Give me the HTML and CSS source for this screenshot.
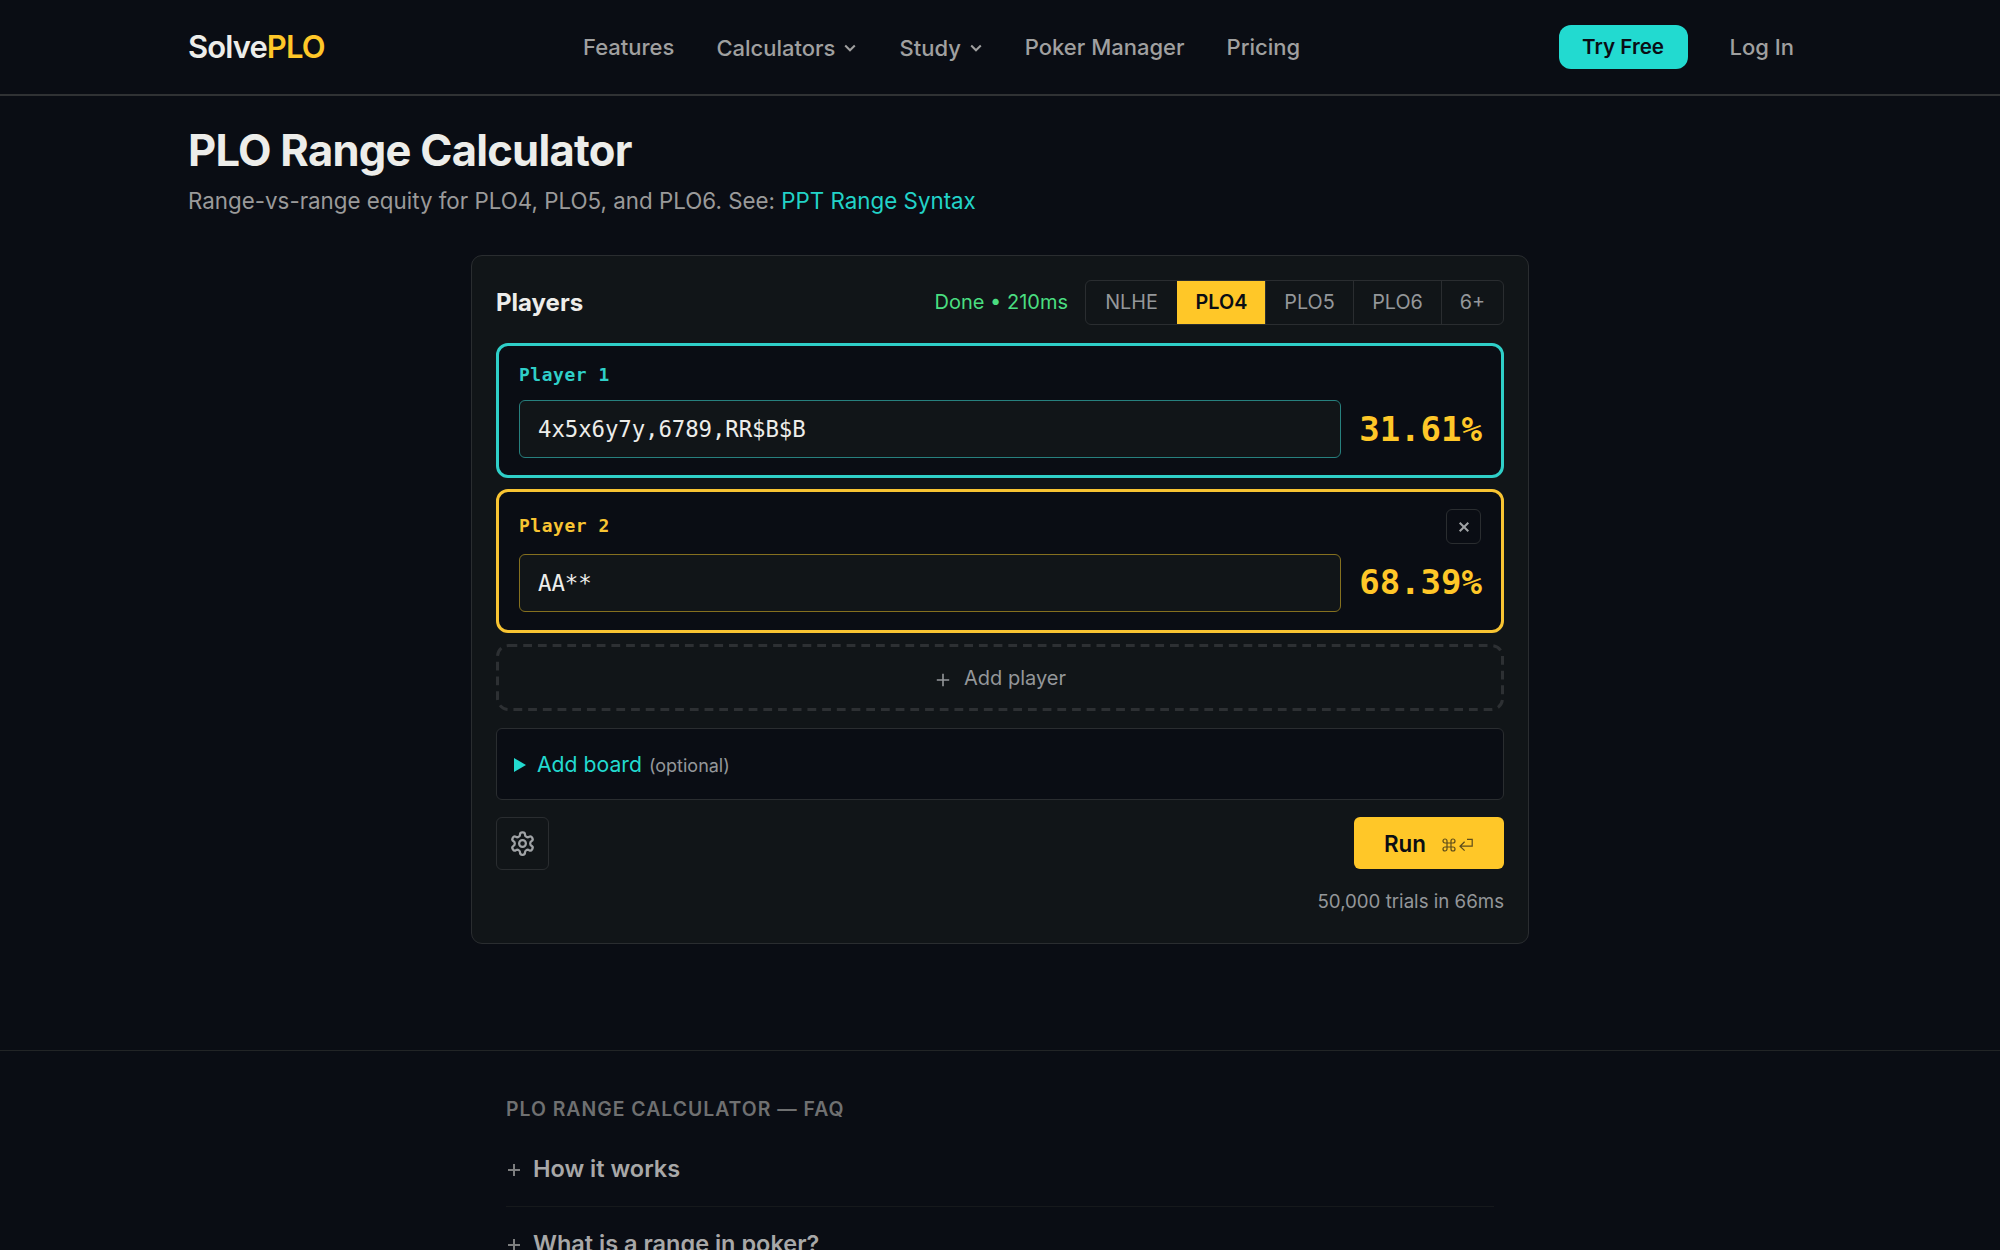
FILE: index.html
```html
<!DOCTYPE html>
<html lang="en">
<head>
  <meta charset="UTF-8">
  <meta name="viewport" content="width=device-width, initial-scale=1.0">
  <title>PLO Range Calculator</title>
  <link rel="stylesheet" href="styles.css">
</head>
<body>
  <header class="header">
    <a href="#" class="logo">Solve<span>PLO</span></a>
    <nav class="nav">
      <a href="#">Features</a>
      <a href="#" class="has-menu">Calculators
        <svg width="14" height="14" viewBox="0 0 14 14"><path d="M2.2 4.5 7 9.3l4.8-4.8"/></svg>
      </a>
      <a href="#" class="has-menu">Study
        <svg width="14" height="14" viewBox="0 0 14 14"><path d="M2.2 4.5 7 9.3l4.8-4.8"/></svg>
      </a>
      <a href="#">Poker Manager</a>
      <a href="#">Pricing</a>
    </nav>
    <div class="account">
      <a href="#" class="try">Try Free</a>
      <a href="#">Log In</a>
    </div>
  </header>

  <main class="main">
    <h1>PLO Range Calculator</h1>
    <p class="intro">Range-vs-range equity for PLO4, PLO5, and PLO6. See: <a href="#">PPT Range Syntax</a></p>

    <section class="card">
      <div class="card-head">
        <h2>Players</h2>
        <span class="status">Done • 210ms</span>
        <div class="tabs">
          <button class="tab">NLHE</button>
          <button class="tab active">PLO4</button>
          <button class="tab">PLO5</button>
          <button class="tab">PLO6</button>
          <button class="tab">6+</button>
        </div>
      </div>

      <div class="player player-1">
        <div class="player-head"><span class="name">Player 1</span></div>
        <div class="player-row">
          <input type="text" class="range" value="4x5x6y7y,6789,RR$B$B">
          <span class="equity">31.61%</span>
        </div>
      </div>

      <div class="player player-2">
        <div class="player-head">
          <span class="name">Player 2</span>
          <button class="remove"><svg width="12" height="12" viewBox="0 0 12 12"><path d="M1.7 1.7l8.6 8.6M10.3 1.7l-8.6 8.6"/></svg></button>
        </div>
        <div class="player-row">
          <input type="text" class="range" value="AA**">
          <span class="equity">68.39%</span>
        </div>
      </div>

      <button class="add-player">
        <svg class="dashes" width="1008" height="67"><rect x="1.5" y="1.5" width="1005" height="64" rx="11"/></svg>
        <svg class="plus" width="14" height="14" viewBox="0 0 14 14"><path d="M7 .8v12.4M.8 7h12.4"/></svg>
        <span>Add player</span>
      </button>

      <div class="board">
        <svg width="12" height="14" viewBox="0 0 12 14"><path d="M0 0l12 7-12 7z"/></svg>
        <span class="board-label">Add board</span>
        <span class="optional">(optional)</span>
      </div>

      <div class="actions">
        <button class="settings">
          <svg width="27" height="27" viewBox="0 0 24 24"><path d="M12.22 2h-.44a2 2 0 0 0-2 2v.18a2 2 0 0 1-1 1.73l-.43.25a2 2 0 0 1-2 0l-.15-.08a2 2 0 0 0-2.73.73l-.22.38a2 2 0 0 0 .73 2.73l.15.1a2 2 0 0 1 1 1.72v.51a2 2 0 0 1-1 1.74l-.15.09a2 2 0 0 0-.73 2.73l.22.38a2 2 0 0 0 2.73.73l.15-.08a2 2 0 0 1 2 0l.43.25a2 2 0 0 1 1 1.73V20a2 2 0 0 0 2 2h.44a2 2 0 0 0 2-2v-.18a2 2 0 0 1 1-1.73l.43-.25a2 2 0 0 1 2 0l.15.08a2 2 0 0 0 2.73-.73l.22-.39a2 2 0 0 0-.73-2.73l-.15-.08a2 2 0 0 1-1-1.74v-.5a2 2 0 0 1 1-1.74l.15-.09a2 2 0 0 0 .73-2.73l-.22-.38a2 2 0 0 0-2.73-.73l-.15.08a2 2 0 0 1-2 0l-.43-.25a2 2 0 0 1-1-1.73V4a2 2 0 0 0-2-2z"/><circle cx="12" cy="12" r="3"/></svg>
        </button>
        <button class="run">Run
          <svg width="32" height="14" viewBox="0 0 32 14"><path d="M5 5V3a2 2 0 1 0-2 2h8a2 2 0 1 0-2-2v8a2 2 0 1 0 2-2H3a2 2 0 1 0 2 2z"/><path d="M25 1.4h5.2v6.8H18M22.6 3.8 18 8.2l4.6 4.4"/></svg>
        </button>
      </div>
      <p class="trials">50,000 trials in 66ms</p>
    </section>
  </main>

  <section class="faq">
    <div class="faq-inner">
      <h3>PLO RANGE CALCULATOR — FAQ</h3>
      <div class="question"><svg width="12" height="12" viewBox="0 0 12 12"><path d="M6 0v12M0 6h12"/></svg><span>How it works</span></div>
      <div class="question"><svg width="12" height="12" viewBox="0 0 12 12"><path d="M6 0v12M0 6h12"/></svg><span>What is a range in poker?</span></div>
    </div>
  </section>
</body>
</html>
```

FILE: styles.css
```css
* {
  margin: 0;
  padding: 0;
  box-sizing: border-box;
}

html {
  overflow: hidden;
}

body {
  height: 1250px;
  overflow: hidden;
  background-color: #0a0d14;
  color: #ededea;
  font-family: Inter, "Liberation Sans", sans-serif;
}

a {
  color: inherit;
  text-decoration: none;
}

button {
  background: none;
  border: none;
  color: inherit;
  font-family: inherit;
}

svg {
  display: block;
  flex: none;
  fill: none;
  stroke: currentColor;
  stroke-width: 2;
}

/* header */
.header {
  display: flex;
  align-items: center;
  height: 96px;
  padding: 0 206px 0 188px;
  border-bottom: 2px solid #303234;
}

.logo {
  width: 395px;
  padding-bottom: 2px;
  font-size: 31px;
  font-weight: 600;
  letter-spacing: -0.9px;
}
.logo span {
  color: #ffc728;
}

.nav {
  display: flex;
  align-items: center;
  gap: 42px;
  color: #a0a0a0;
  font-size: 22px;
  font-weight: 500;
}
.nav .has-menu {
  display: flex;
  align-items: center;
  gap: 8px;
  padding-top: 2px;
}

.account {
  display: flex;
  align-items: center;
  gap: 42px;
  margin-left: auto;
  color: #a0a0a0;
  font-size: 22px;
  font-weight: 500;
}
.account .try {
  width: 129px;
  border-radius: 12px;
  background-color: #22dad0;
  color: #0a0d14;
  font-size: 20.6px;
  font-weight: 600;
  line-height: 44px;
  text-align: center;
}

/* calculator */
.main {
  height: 954px;
  padding: 27px 188px 0;
}
.main h1 {
  font-size: 43.5px;
  line-height: 54px;
  letter-spacing: -0.75px;
}
.intro {
  margin-top: 7px;
  color: #9a9a9a;
  font-size: 22.35px;
  line-height: 34px;
}
.intro a {
  color: #22d3c8;
}

.card {
  width: 1058px;
  height: 689px;
  margin: 37px auto 0;
  padding: 24px 24px 0;
  border: 1px solid #2a2d30;
  border-radius: 11px;
  background-color: #111518;
}

.card-head {
  display: flex;
  align-items: center;
  height: 45px;
  margin-bottom: 18px;
}
.card-head h2 {
  padding-bottom: 1px;
  font-size: 24px;
  font-weight: 700;
}
.status {
  margin-left: auto;
  margin-right: 17px;
  padding-bottom: 1px;
  color: #4ade80;
  font-size: 20px;
}
.tabs {
  display: grid;
  grid-template-columns: 91px 88px 88px 88px 62px;
  width: 419px;
  height: 45px;
  border: 1px solid #2a2d30;
  border-radius: 6px;
  overflow: hidden;
}
.tab {
  padding-bottom: 1px;
  border-left: 1px solid #2a2d30;
  color: #94979a;
  font-size: 19.8px;
}
.tab:first-child {
  border-left: none;
}
.tab.active {
  background-color: #ffc728;
  border-color: #ffc728;
  color: #0a0d14;
  font-weight: 600;
}

.player {
  margin-bottom: 11px;
  padding: 0 20px;
  border: 3px solid #2fcfc8;
  border-radius: 12px;
  background-color: #0a0d14;
  font-family: "DejaVu Sans Mono", monospace;
}
.player-1 {
  height: 135px;
  padding-top: 13px;
}
.player-2 {
  height: 144px;
  padding-top: 17px;
  border-color: #f8c432;
}
.player-head {
  display: flex;
  align-items: center;
  justify-content: space-between;
}
.player-1 .player-head {
  height: 31px;
  margin-bottom: 10px;
}
.player-2 .player-head {
  height: 35px;
  margin-bottom: 10px;
}
.name {
  color: #2fcfc8;
  font-size: 17.9px;
  font-weight: 700;
  letter-spacing: 0.6px;
}
.player-2 .name {
  padding-bottom: 2px;
  color: #f8c432;
}
.remove {
  display: flex;
  align-items: center;
  justify-content: center;
  width: 35px;
  height: 35px;
  border: 1px solid #2a2d30;
  border-radius: 6px;
  color: #a0a3a6;
}
.player-row {
  display: flex;
  align-items: center;
  justify-content: space-between;
}
.range {
  width: 822px;
  height: 58px;
  padding: 0 18px;
  border: 1px solid #27807e;
  border-radius: 6px;
  background-color: #111518;
  color: #ededea;
  font-family: inherit;
  font-size: 22.4px;
  letter-spacing: -0.1px;
}
.player-2 .range {
  border-color: #85701f;
}
.equity {
  margin-right: -1px;
  color: #ffc728;
  font-size: 34px;
  font-weight: 700;
}
.player-2 .equity {
  padding-bottom: 2px;
}

.add-player {
  position: relative;
  display: flex;
  align-items: center;
  justify-content: center;
  gap: 14px;
  width: 100%;
  height: 67px;
  margin-bottom: 17px;
  padding-left: 2px;
  color: #94979a;
  font-size: 20px;
}
.dashes {
  position: absolute;
  top: 0;
  left: 0;
  stroke: #2d3033;
  stroke-width: 3;
  stroke-dasharray: 8.8 5.9;
}
.plus {
  margin-top: 5px;
  stroke-width: 1.6;
}

.board {
  display: flex;
  align-items: center;
  height: 72px;
  padding-left: 17px;
  border: 1px solid #2a2d30;
  border-radius: 6px;
  background-color: #0a0d14;
  color: #22dad0;
}
.board svg {
  margin-top: 2px;
  fill: currentColor;
  stroke: none;
}
.board-label {
  margin-left: 11px;
  font-size: 21.2px;
}
.optional {
  margin-left: 7px;
  padding-top: 2px;
  color: #94979a;
  font-size: 18px;
}

.actions {
  display: flex;
  justify-content: space-between;
  margin-top: 17px;
}
.settings {
  display: flex;
  align-items: center;
  justify-content: center;
  width: 53px;
  height: 53px;
  padding-right: 1px;
  border: 1px solid #2a2d30;
  border-radius: 6px;
  color: #a0a3a6;
}
.run {
  display: flex;
  align-items: center;
  justify-content: center;
  gap: 16px;
  width: 150px;
  height: 52px;
  border-radius: 6px;
  background-color: #ffc728;
  color: #0a0d14;
  font-size: 22.4px;
  font-weight: 600;
}
.run svg {
  margin-top: 3px;
  opacity: 0.65;
  stroke-width: 1.2;
}
.trials {
  margin-top: 19px;
  color: #94979a;
  font-size: 18.7px;
  line-height: 26px;
  text-align: right;
}

/* faq */
.faq {
  border-top: 1px solid #222526;
}
.faq-inner {
  width: 988px;
  margin: 0 auto;
  padding-top: 43px;
}
.faq h3 {
  color: #6f7071;
  font-size: 19.4px;
  font-weight: 600;
  letter-spacing: 1px;
  line-height: 30px;
}
.question {
  display: flex;
  align-items: center;
  gap: 13px;
  height: 75px;
  padding: 0 2px;
  border-bottom: 1px solid #16191c;
  color: #a8a8a8;
  font-size: 23.5px;
  font-weight: 600;
}
.faq h3 + .question {
  margin-top: 8px;
}
.question span {
  padding-bottom: 1px;
}
.question svg {
  margin-top: 2px;
  stroke: #7d7e7f;
}
```
